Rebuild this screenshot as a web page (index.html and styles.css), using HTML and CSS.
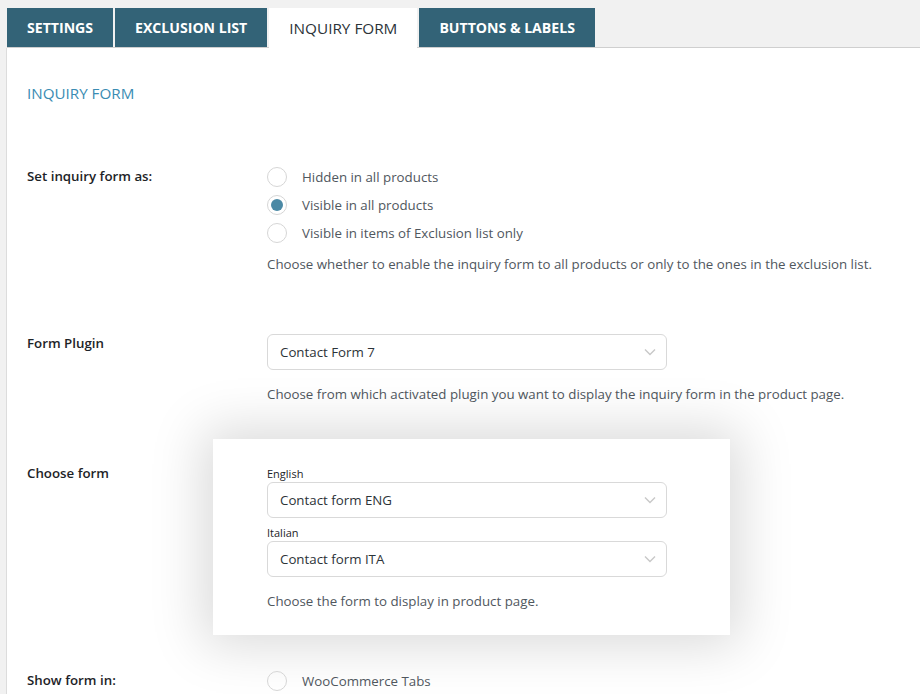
FILE: index.html
```html
<!DOCTYPE html>
<html>
<head>
<meta charset="utf-8">
<link rel="stylesheet" href="styles.css">
</head>
<body>
<div class="wrap">
  <nav class="tabs">
    <a class="tab">SETTINGS</a>
    <a class="tab">EXCLUSION LIST</a>
    <a class="tab active">INQUIRY FORM</a>
    <a class="tab">BUTTONS &amp; LABELS</a>
  </nav>
  <div class="panel">
    <h2 class="title">INQUIRY FORM</h2>

    <div class="row row-first">
      <div class="label">Set inquiry form as:</div>
      <div class="field">
        <div class="radios">
          <label class="radio"><span class="dot"></span>Hidden in all products</label>
          <label class="radio checked"><span class="dot"></span>Visible in all products</label>
          <label class="radio"><span class="dot"></span>Visible in items of Exclusion list only</label>
        </div>
        <p class="desc">Choose whether to enable the inquiry form to all products or only to the ones in the exclusion list.</p>
      </div>
    </div>

    <div class="row row-plugin">
      <div class="label label-plugin">Form Plugin</div>
      <div class="field">
        <div class="select"><span>Contact Form 7</span><svg class="chev" width="12" height="8" viewBox="0 0 12 8"><path d="M1 1.5l5 5 5-5" fill="none" stroke="#c8c8c8" stroke-width="1.4"/></svg></div>
        <p class="desc">Choose from which activated plugin you want to display the inquiry form in the product page.</p>
      </div>
    </div>

    <div class="row row-choose">
      <div class="label label-choose">Choose form</div>
      <div class="card">
        <div class="lang">English</div>
        <div class="select"><span>Contact form ENG</span><svg class="chev" width="12" height="8" viewBox="0 0 12 8"><path d="M1 1.5l5 5 5-5" fill="none" stroke="#c8c8c8" stroke-width="1.4"/></svg></div>
        <div class="lang lang2">Italian</div>
        <div class="select"><span>Contact form ITA</span><svg class="chev" width="12" height="8" viewBox="0 0 12 8"><path d="M1 1.5l5 5 5-5" fill="none" stroke="#c8c8c8" stroke-width="1.4"/></svg></div>
        <p class="desc desc-card">Choose the form to display in product page.</p>
      </div>
    </div>

    <div class="row row-show">
      <div class="label">Show form in:</div>
      <div class="field">
        <label class="radio"><span class="dot"></span>WooCommerce Tabs</label>
      </div>
    </div>
  </div>
</div>
</body>
</html>
```
FILE: styles.css
```css
html, body {
  margin: 0;
  padding: 0;
  background: #f1f1f1;
  height: 694px;
  overflow: hidden;
}
body {
  font-family: "Open Sans", "Noto Sans", sans-serif;
  font-size: 13.3px;
  color: #3c434a;
}
.wrap {
  padding: 8px 0 0 7px;
}
.tabs {
  display: flex;
  gap: 2px;
  height: 39px;
  border-bottom: 1px solid #cfcfcf;
}
.tab {
  background: #336377;
  color: #fff;
  font-weight: 700;
  font-size: 14.1px;
  display: flex;
  align-items: center;
  padding: 0 20px;
  height: 39px;
  box-sizing: border-box;
}
.tab.active {
  background: #fff;
  color: #2c3338;
  font-weight: 400;
  font-size: 15.3px;
  height: 40px;
}
.panel {
  background: #fff;
  border-left: 1px solid #dcdcdc;
  margin-left: -1px;
  padding: 0 0 0 20px;
  height: 700px;
}
.title {
  margin: 0;
  padding-top: 35px;
  font-size: 15.2px;
  font-weight: 400;
  color: #3a8cb3;
  line-height: 20px;
}
.row {
  display: flex;
}
.label {
  width: 240px;
  flex: none;
  font-weight: 600;
  color: #1d2327;
  line-height: 18px;
}
.row-first {
  margin-top: 64px;
}
.field {
  flex: none;
}
.radios {
  display: flex;
  flex-direction: column;
  gap: 8px;
}
.radio {
  display: flex;
  align-items: center;
  height: 20px;
  color: #50575e;
}
.dot {
  width: 18px;
  height: 18px;
  border: 1px solid #d6d6d6;
  border-radius: 50%;
  margin-right: 15px;
  box-sizing: content-box;
  position: relative;
  flex: none;
}
.radio.checked .dot::after {
  content: "";
  position: absolute;
  left: 3px;
  top: 3px;
  width: 12px;
  height: 12px;
  border-radius: 50%;
  background: #4b89a5;
}
.desc {
  margin: 12px 0 0;
  line-height: 18px;
  color: #50575e;
}
.row-plugin {
  margin-top: 61px;
}
.select {
  width: 400px;
  height: 36px;
  box-sizing: border-box;
  border: 1px solid #d9d9d9;
  border-radius: 6px;
  display: flex;
  align-items: center;
  justify-content: space-between;
  padding: 0 8px 0 12px;
  color: #2c3338;
  background: #fff;
}
.chev {
  margin-right: 2px;
}
.row-plugin .desc {
  margin-top: 15px;
}
.row-choose {
  margin-top: 36px;
}
.label-choose {
  width: 186px;
  padding-top: 25px;
}
.card {
  width: 517px;
  height: 196px;
  box-sizing: border-box;
  background: #fff;
  padding: 28px 0 0 54px;
  box-shadow: 0 0 50px 10px rgba(0, 0, 0, 0.15);
}
.lang {
  font-size: 11px;
  line-height: 14px;
  color: #1d2327;
  margin-bottom: 1px;
}
.lang2 {
  margin-top: 8px;
}
.desc-card {
  margin-top: 15px;
}
.row-show {
  margin-top: 36px;
}
```
